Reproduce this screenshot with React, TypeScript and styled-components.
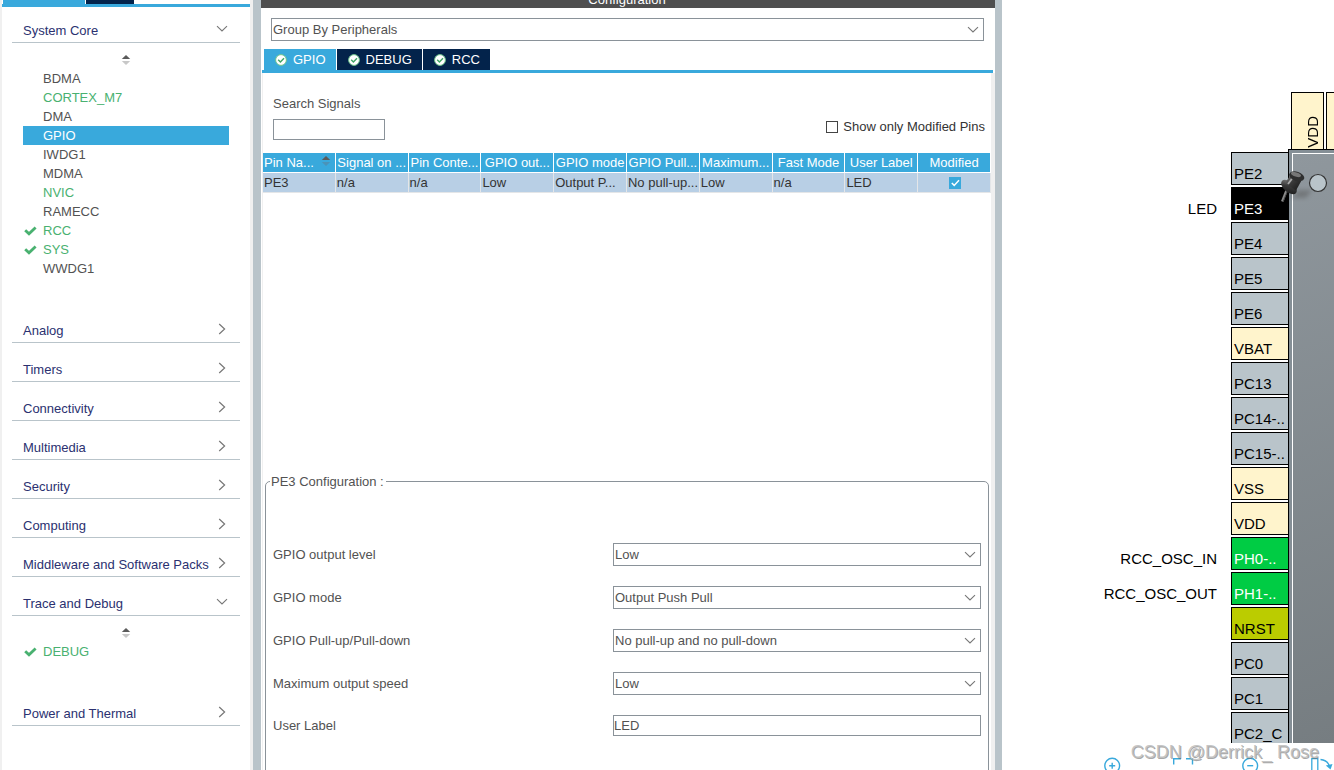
import React from "react";
import styled, { createGlobalStyle, css } from "styled-components";

const color = {
  blue: "#39a9dc",
  navy: "#03234b",
  green: "#49b170",
  text: "#525252",
  heading: "#2b3170",
  edge: "#f0f0f0",
  splitter: "#b9c4ca",
  border: "#8a9299",
};

const GlobalStyle = createGlobalStyle`
  *, *::before, *::after { box-sizing: border-box; }
  body {
    margin: 0;
    background: #fff;
    color: ${color.text};
    font: 13px/15px "Liberation Sans", Arial, sans-serif;
  }
  button, input, select {
    margin: 0;
    padding: 0;
    border: 0;
    border-radius: 0;
    background: none;
    color: inherit;
    font: inherit;
  }
  ul { margin: 0; padding: 0; list-style: none; }
`;

const Page = styled.div`
  display: grid;
  grid-template-columns: 253px 8px minmax(0, 367fr) 7px minmax(0, 166fr);
  height: 100vh;
  overflow: hidden;
`;

const Splitter = styled.div`
  background: ${color.splitter};
`;

/* ---------- category list ---------- */

const Sidebar = styled.nav`
  min-height: 0;
  overflow: hidden;
  border-left: 2px solid ${color.edge};
  border-right: 3px solid ${color.edge};
`;

const SidebarTabs = styled.div`
  display: flex;
  gap: 1px;
  height: 7px;
  border-bottom: 3px solid ${color.blue};
`;

const SidebarTab = styled.div<{ $active?: boolean }>`
  width: ${(p) => (p.$active ? 82 : 48)}px;
  margin-left: ${(p) => (p.$active ? 1 : 0)}px;
  background: ${(p) => (p.$active ? color.blue : color.navy)};
`;

const Sections = styled.div`
  display: flex;
  flex-direction: column;
  gap: 10px;
  padding: 7px 10px 0;
`;

const SectionHeader = styled.button`
  display: flex;
  align-items: center;
  justify-content: space-between;
  width: 100%;
  height: 29px;
  padding: 5px 12px 0 11px;
  border-bottom: 1px solid ${color.splitter};
  color: ${color.heading};
  text-align: left;
  white-space: nowrap;

  svg { margin-bottom: 4px; }
`;

const SectionBody = styled.div`
  padding: 0 11px 26px;
`;

const SortButton = styled.button`
  display: flex;
  justify-content: center;
  align-items: flex-end;
  width: 100%;
  height: 26px;
  padding-bottom: 4px;
`;

const Item = styled.button<{ $tone?: "green" | "selected" }>`
  display: flex;
  align-items: center;
  width: 100%;
  height: 19px;
  text-align: left;
  color: ${(p) => (p.$tone === "green" ? color.green : p.$tone === "selected" ? "#fff" : color.text)};
  background: ${(p) => (p.$tone === "selected" ? color.blue : "transparent")};
`;

const ItemMark = styled.span`
  flex: none;
  display: flex;
  width: 20px;
  padding-left: 1px;
`;

/* ---------- configuration ---------- */

const Config = styled.main`
  display: flex;
  flex-direction: column;
  min-width: 0;
  min-height: 0;
  overflow: hidden;
`;

const TitleBar = styled.header`
  flex: none;
  display: flex;
  justify-content: center;
  align-items: flex-end;
  height: 8px;
  padding: 0 2px 1px 0;
  overflow: hidden;
  background: #4f4f4f;
  color: #fff;
`;

const GroupRow = styled.div`
  flex: none;
  padding: 10px 11px 8px 10px;
`;

const ComboBox = styled.div`
  position: relative;

  svg {
    position: absolute;
    right: 5px;
    top: 8px;
    pointer-events: none;
  }
`;

const field = css`
  display: block;
  width: 100%;
  border: 1px solid ${color.border};
  background: #fff;
`;

const Select = styled.select`
  ${field}
  appearance: none;
  height: 23px;
  padding: 0 20px 0 1px;
`;

const TextInput = styled.input`
  ${field}
  height: 21px;
`;

const Tabs = styled.div`
  flex: none;
  display: flex;
  gap: 1px;
  margin: 0 2px 0 1px;
  padding-left: 2px;
  border-bottom: 3px solid ${color.blue};
`;

const Tab = styled.button<{ $active?: boolean }>`
  display: flex;
  align-items: center;
  gap: 6px;
  height: 21px;
  padding: 0 10px 0 11px;
  background: ${(p) => (p.$active ? color.blue : color.navy)};
  color: #fff;
`;

const TabPanel = styled.section`
  flex: 1;
  min-height: 0;
  display: flex;
  flex-direction: column;
  margin-left: 1px;
  border-left: 1px solid ${color.edge};
  border-right: 4px solid ${color.edge};
`;

const Filters = styled.div`
  flex: none;
  display: flex;
  justify-content: space-between;
  align-items: flex-end;
  padding: 23px 6px 13px 10px;
`;

const Search = styled.label`
  display: flex;
  flex-direction: column;
  gap: 8px;
  width: 112px;
`;

const CheckLabel = styled.label`
  display: flex;
  align-items: center;
  gap: 5px;
  padding-bottom: 6px;
  color: #333;
`;

const CheckBox = styled.input`
  appearance: none;
  width: 12px;
  height: 12px;
  border: 1px solid #444;
  background: #fff;

  &:checked {
    border-color: ${color.blue};
    background: ${color.blue};
  }
`;

const CheckCell = styled.span`
  position: relative;
  display: block;
  width: 12px;
  height: 12px;
  margin: 0 auto;

  input { display: block; }

  svg {
    position: absolute;
    left: 2px;
    top: 2px;
    pointer-events: none;
  }
`;

const TableArea = styled.div`
  flex: none;
  height: 321px;
`;

const Table = styled.table`
  width: 100%;
  table-layout: fixed;
  border-collapse: separate;
  border-spacing: 0;
`;

const HeadCell = styled.th<{ $sorted?: boolean }>`
  overflow: hidden;
  height: 20px;
  padding: 0;
  border: solid #fff;
  border-width: 0 1px 1px 0;
  background: ${color.blue};
  color: #fff;
  font-weight: normal;
  text-align: ${(p) => (p.$sorted ? "left" : "center")};
  white-space: nowrap;
`;

const SortedHead = styled.span`
  display: flex;
  justify-content: space-between;
  align-items: center;
  padding: 0 4px 0 1px;

  svg { margin-bottom: 3px; }
`;

const Cell = styled.td`
  overflow: hidden;
  height: 20px;
  padding: 0 0 0 1px;
  border: solid #e4e6e8;
  border-width: 0 1px 1px 0;
  background: #b8cfe5;
  color: #333;
  white-space: nowrap;
`;

const PinConfig = styled.fieldset`
  flex: 1 0 auto;
  min-width: 0;
  margin: 0 2px -6px;
  padding: 54px 7px 40px;
  border: 1px solid ${color.border};
  border-radius: 5px;
`;

const Legend = styled.legend`
  margin-left: -3px;
  padding: 0 2px 0 1px;
`;

const Fields = styled.div`
  display: grid;
  gap: 20px;
`;

const FieldRow = styled.div`
  display: grid;
  grid-template-columns: 340fr 368fr;
  align-items: center;
`;

/* ---------- pinout view ---------- */

const Pinout = styled.aside`
  position: relative;
  display: flex;
  flex-direction: column;
  min-width: 0;
  min-height: 0;
  overflow: hidden;
`;

const PinoutCanvas = styled.div`
  flex: 1;
  min-height: 0;
  display: flex;
  justify-content: flex-end;
  overflow: hidden;
  color: #000;
  font-size: 15px;
  line-height: 17px;
`;

const PinColumn = styled.ul`
  display: flex;
  flex-direction: column;
  gap: 2px;
  padding-top: 152px;
`;

const PinRow = styled.li`
  flex: none;
  display: flex;
  justify-content: flex-end;
  align-items: flex-end;
  gap: 14px;
`;

const Signal = styled.span`
  padding-bottom: 3px;
  white-space: nowrap;
`;

type PinKind = "io" | "active" | "power" | "system" | "reset";

const pinFill: Record<PinKind, string> = {
  io: "#b9c4ca",
  active: "#000",
  power: "#fff4cc",
  system: "#00cc44",
  reset: "#bbcc00",
};

const Pin = styled.button<{ $kind: PinKind }>`
  display: flex;
  align-items: flex-end;
  width: 57px;
  height: 33px;
  padding: 0 0 2px 2px;
  border: 1px solid #000;
  border-right: 0;
  background: ${(p) => pinFill[p.$kind]};
  color: ${(p) => (p.$kind === "active" || p.$kind === "system" ? "#fff" : "#000")};
`;

const ChipColumn = styled.div`
  position: relative;
  flex: none;
  display: flex;
  flex-direction: column;
  width: 46px;
  padding-top: 92px;
`;

const TopPins = styled.div`
  flex: none;
  display: flex;
  gap: 2px;
  width: 100%;
  height: 57px;
  padding-left: 3px;
  overflow: hidden;
`;

const TopPin = styled.button`
  flex: none;
  display: flex;
  align-items: flex-end;
  justify-content: flex-end;
  width: 33px;
  padding: 0 2px 1px 0;
  border: 1px solid #000;
  border-bottom: 0;
  background: ${pinFill.power};
`;

const TopPinText = styled.span`
  writing-mode: vertical-rl;
  transform: rotate(180deg);
`;

const Chip = styled.div`
  flex: 1;
  padding: 3px 0 0 3px;
  border: solid #000;
  border-width: 1px 0 0 1px;
  background: #858f96;
`;

const ChipFace = styled.div`
  height: 100%;
  border: solid #fff;
  border-width: 1px 0 0 1px;
  background: linear-gradient(160deg, #8f979d, #767d81);
`;

const PinOneMark = styled.svg`
  position: absolute;
  left: 20px;
  top: 173px;
`;

const PushPin = styled.svg`
  position: absolute;
  left: -10px;
  top: 170px;
`;

const Tools = styled.div`
  flex: none;
  display: flex;
  height: 27px;
  padding: 14px 0 0 102px;
  overflow: hidden;
`;

const Tool = styled.button`
  flex: none;
  display: flex;
  width: 69px;
  color: ${color.blue};
`;

const Watermark = styled.div`
  position: absolute;
  right: 15px;
  bottom: 7px;
  color: rgba(190, 190, 190, 0.9);
  font-size: 18px;
  line-height: 22px;
  white-space: nowrap;
  text-shadow: 1px 1px 0 rgba(110, 110, 110, 0.6);
  pointer-events: none;
`;

/* ---------- icons ---------- */

const ChevronDown = () => (
  <svg width="12" height="8" viewBox="0 0 12 8" fill="none" stroke="#777" strokeWidth="1.1">
    <path d="M1 1.2 6 6l5-4.8" />
  </svg>
);

const ChevronRight = () => (
  <svg width="12" height="12" viewBox="0 0 12 12" fill="none" stroke="#777" strokeWidth="1.2">
    <path d="M3.2 1 8.6 6l-5.4 5" />
  </svg>
);

const SortIcon = ({ light = "#c8c8c8" }: { light?: string }) => (
  <svg width="10" height="10" viewBox="0 0 10 10">
    <path d="M5 0 9.2 4H.8z" fill="#5b5b5b" />
    <path d="M5 10 9.2 6H.8z" fill={light} />
  </svg>
);

const Tick = () => (
  <svg width="13" height="10" viewBox="0 0 13 10" fill="none" stroke={color.green} strokeWidth="2.8">
    <path d="M1.2 4.2 5 7.8 11.6 1.4" />
  </svg>
);

const StatusIcon = () => (
  <svg width="12" height="12" viewBox="0 0 12 12">
    <circle cx="6" cy="6" r="5.4" fill="#fff" stroke="#6cc48a" strokeWidth="1" />
    <path d="M3.2 5.8 5.4 8 9 4.2" fill="none" stroke="#3fa564" strokeWidth="1.4" />
  </svg>
);

const CheckMark = () => (
  <svg width="9" height="8" viewBox="0 0 9 8" fill="none" stroke="#fff" strokeWidth="1.5">
    <path d="M.8 4 3.2 6.4 8 1.2" />
  </svg>
);

const ZoomIcon = ({ plus }: { plus?: boolean }) => (
  <svg width="17" height="17" viewBox="0 0 17 17" fill="none" stroke="currentColor" strokeWidth="1.4">
    <circle cx="8.2" cy="8.7" r="7.4" />
    <path d={plus ? "M5.2 8.7h6M8.2 5.7v6" : "M5.2 8.7h6"} />
  </svg>
);

const FitIcon = () => (
  <svg width="21" height="20" viewBox="0 0 21 20" fill="none" stroke="currentColor" strokeWidth="1.4">
    <path d="M.7 7.5V1.7H8M13 1.7h6.500v5.8M19.500 13v6H13M8 19H.7v-6" />
  </svg>
);

const RotateIcon = () => (
  <svg width="22" height="20" viewBox="0 0 22 20" fill="none" stroke="currentColor" strokeWidth="1.3">
    <path d="M.8 1.7h6v18h-6z" />
    <path d="M9.5 2.5c4.5.4 8 3 9.3 7.5" />
    <path d="m14.8 8.5 6.7-1.5-2 5.5z" fill="currentColor" stroke="none" />
  </svg>
);

const PushPinIcon = () => (
  <PushPin width="44" height="38" viewBox="0 0 44 38">
    <defs>
      <linearGradient id="pinHead" x1="0" y1="0" x2="1" y2="1">
        <stop offset="0" stopColor="#8a8a8a" />
        <stop offset=".45" stopColor="#3a3a3a" />
        <stop offset="1" stopColor="#161616" />
      </linearGradient>
      <filter id="pinShadow" x="-50%" y="-50%" width="200%" height="200%">
        <feGaussianBlur stdDeviation="2" />
      </filter>
    </defs>
    <path d="M14 28 20 20 34 20 28 28z" fill="#555" opacity=".45" filter="url(#pinShadow)" />
    <path d="M9.5 18 4.200 31.500" stroke="#8a8a8a" strokeWidth="2.400" />
    <path d="M10.500 18.500 5 32" stroke="#444" strokeWidth="1" />
    <ellipse cx="11" cy="17" rx="9.300" ry="5.200" transform="rotate(40 11 17)" fill="url(#pinHead)" />
    <path d="M13 4.500 23.500 10.500 18 20.500 7 13z" fill="url(#pinHead)" />
    <path d="M14.500 8 10 14" stroke="#aaa" strokeWidth="1.800" />
    <ellipse cx="18.700" cy="6.300" rx="7.800" ry="4.600" transform="rotate(18 18.700 6.300)" fill="#2f2f2f" />
    <ellipse cx="18" cy="4.500" rx="5.200" ry="2" transform="rotate(18 18 4.500)" fill="#777" />
  </PushPin>
);

/* ---------- data ---------- */

interface Entry {
  name: string;
  tone?: "green" | "selected";
  ticked?: boolean;
}

const sections: { title: string; items?: Entry[] }[] = [
  {
    title: "System Core",
    items: [
      { name: "BDMA" },
      { name: "CORTEX_M7", tone: "green" },
      { name: "DMA" },
      { name: "GPIO", tone: "selected" },
      { name: "IWDG1" },
      { name: "MDMA" },
      { name: "NVIC", tone: "green" },
      { name: "RAMECC" },
      { name: "RCC", tone: "green", ticked: true },
      { name: "SYS", tone: "green", ticked: true },
      { name: "WWDG1" },
    ],
  },
  { title: "Analog" },
  { title: "Timers" },
  { title: "Connectivity" },
  { title: "Multimedia" },
  { title: "Security" },
  { title: "Computing" },
  { title: "Middleware and Software Packs" },
  { title: "Trace and Debug", items: [{ name: "DEBUG", tone: "green", ticked: true }] },
  { title: "Power and Thermal" },
];

const columns: [string, string][] = [
  ["Signal on ...", "n/a"],
  ["Pin Conte...", "n/a"],
  ["GPIO out...", "Low"],
  ["GPIO mode", "Output P..."],
  ["GPIO Pull...", "No pull-up..."],
  ["Maximum...", "Low"],
  ["Fast Mode", "n/a"],
  ["User Label", "LED"],
];

const settings: [string, string, string][] = [
  ["level", "GPIO output level", "Low"],
  ["mode", "GPIO mode", "Output Push Pull"],
  ["pull", "GPIO Pull-up/Pull-down", "No pull-up and no pull-down"],
  ["speed", "Maximum output speed", "Low"],
];

const pins: { name: string; kind: PinKind; signal?: string }[] = [
  { name: "PE2", kind: "io" },
  { name: "PE3", kind: "active", signal: "LED" },
  { name: "PE4", kind: "io" },
  { name: "PE5", kind: "io" },
  { name: "PE6", kind: "io" },
  { name: "VBAT", kind: "power" },
  { name: "PC13", kind: "io" },
  { name: "PC14-..", kind: "io" },
  { name: "PC15-..", kind: "io" },
  { name: "VSS", kind: "power" },
  { name: "VDD", kind: "power" },
  { name: "PH0-..", kind: "system", signal: "RCC_OSC_IN" },
  { name: "PH1-..", kind: "system", signal: "RCC_OSC_OUT" },
  { name: "NRST", kind: "reset" },
  { name: "PC0", kind: "io" },
  { name: "PC1", kind: "io" },
  { name: "PC2_C", kind: "io" },
];

/* ---------- page ---------- */

const CategoryList = () => (
  <Sidebar aria-label="Categories">
    <SidebarTabs>
      <SidebarTab $active />
      <SidebarTab />
    </SidebarTabs>
    <Sections>
      {sections.map(({ title, items }) => (
        <div key={title}>
          <SectionHeader aria-expanded={!!items}>
            {title}
            {items ? <ChevronDown /> : <ChevronRight />}
          </SectionHeader>
          {items && (
            <SectionBody>
              <SortButton aria-label="Sort">
                <SortIcon />
              </SortButton>
              {items.map((item) => (
                <Item key={item.name} $tone={item.tone}>
                  <ItemMark>{item.ticked && <Tick />}</ItemMark>
                  {item.name}
                </Item>
              ))}
            </SectionBody>
          )}
        </div>
      ))}
    </Sections>
  </Sidebar>
);

const PinTable = () => (
  <TableArea>
    <Table>
      <thead>
        <tr>
          <HeadCell $sorted>
            <SortedHead>
              Pin Na...
              <SortIcon light="#4b93b8" />
            </SortedHead>
          </HeadCell>
          {columns.map(([head]) => (
            <HeadCell key={head}>{head}</HeadCell>
          ))}
          <HeadCell>Modified</HeadCell>
        </tr>
      </thead>
      <tbody>
        <tr>
          <Cell>PE3</Cell>
          {columns.map(([head, value]) => (
            <Cell key={head}>{value}</Cell>
          ))}
          <Cell>
            <CheckCell>
              <CheckBox type="checkbox" defaultChecked aria-label="Modified" />
              <CheckMark />
            </CheckCell>
          </Cell>
        </tr>
      </tbody>
    </Table>
  </TableArea>
);

const Configuration = () => (
  <Config>
    <TitleBar>Configuration</TitleBar>
    <GroupRow>
      <ComboBox>
        <Select aria-label="Grouping">
          <option>Group By Peripherals</option>
        </Select>
        <ChevronDown />
      </ComboBox>
    </GroupRow>
    <Tabs role="tablist">
      {["GPIO", "DEBUG", "RCC"].map((name, i) => (
        <Tab key={name} role="tab" aria-selected={i === 0} $active={i === 0}>
          <StatusIcon />
          {name}
        </Tab>
      ))}
    </Tabs>
    <TabPanel>
      <Filters>
        <Search>
          Search Signals
          <TextInput type="text" />
        </Search>
        <CheckLabel>
          <CheckBox type="checkbox" />
          Show only Modified Pins
        </CheckLabel>
      </Filters>
      <PinTable />
      <PinConfig>
        <Legend>PE3 Configuration :</Legend>
        <Fields>
          {settings.map(([id, label, value]) => (
            <FieldRow key={id}>
              <label htmlFor={id}>{label}</label>
              <ComboBox>
                <Select id={id}>
                  <option>{value}</option>
                </Select>
                <ChevronDown />
              </ComboBox>
            </FieldRow>
          ))}
          <FieldRow>
            <label htmlFor="user-label">User Label</label>
            <TextInput id="user-label" type="text" defaultValue="LED" />
          </FieldRow>
        </Fields>
      </PinConfig>
    </TabPanel>
  </Config>
);

const PinoutView = () => (
  <Pinout aria-label="Pinout view">
    <PinoutCanvas>
      <PinColumn>
        {pins.map((pin) => (
          <PinRow key={pin.name}>
            {pin.signal && <Signal>{pin.signal}</Signal>}
            <Pin $kind={pin.kind}>{pin.name}</Pin>
          </PinRow>
        ))}
      </PinColumn>
      <ChipColumn>
        <TopPins>
          <TopPin>
            <TopPinText>VDD</TopPinText>
          </TopPin>
          <TopPin aria-label="Next pin" />
        </TopPins>
        <Chip>
          <ChipFace />
        </Chip>
        <PinOneMark width="20" height="20" viewBox="0 0 20 20">
          <circle cx="10" cy="10" r="8.5" fill="#b9c4ca" stroke="#333" strokeWidth="1.2" />
        </PinOneMark>
        <PushPinIcon />
      </ChipColumn>
    </PinoutCanvas>
    <Tools>
      <Tool aria-label="Zoom in">
        <ZoomIcon plus />
      </Tool>
      <Tool aria-label="Best fit">
        <FitIcon />
      </Tool>
      <Tool aria-label="Zoom out">
        <ZoomIcon />
      </Tool>
      <Tool aria-label="Rotate">
        <RotateIcon />
      </Tool>
    </Tools>
    <Watermark>CSDN @Derrick_ Rose</Watermark>
  </Pinout>
);

export default function App() {
  return (
    <>
      <GlobalStyle />
      <Page>
        <CategoryList />
        <Splitter />
        <Configuration />
        <Splitter />
        <PinoutView />
      </Page>
    </>
  );
}
